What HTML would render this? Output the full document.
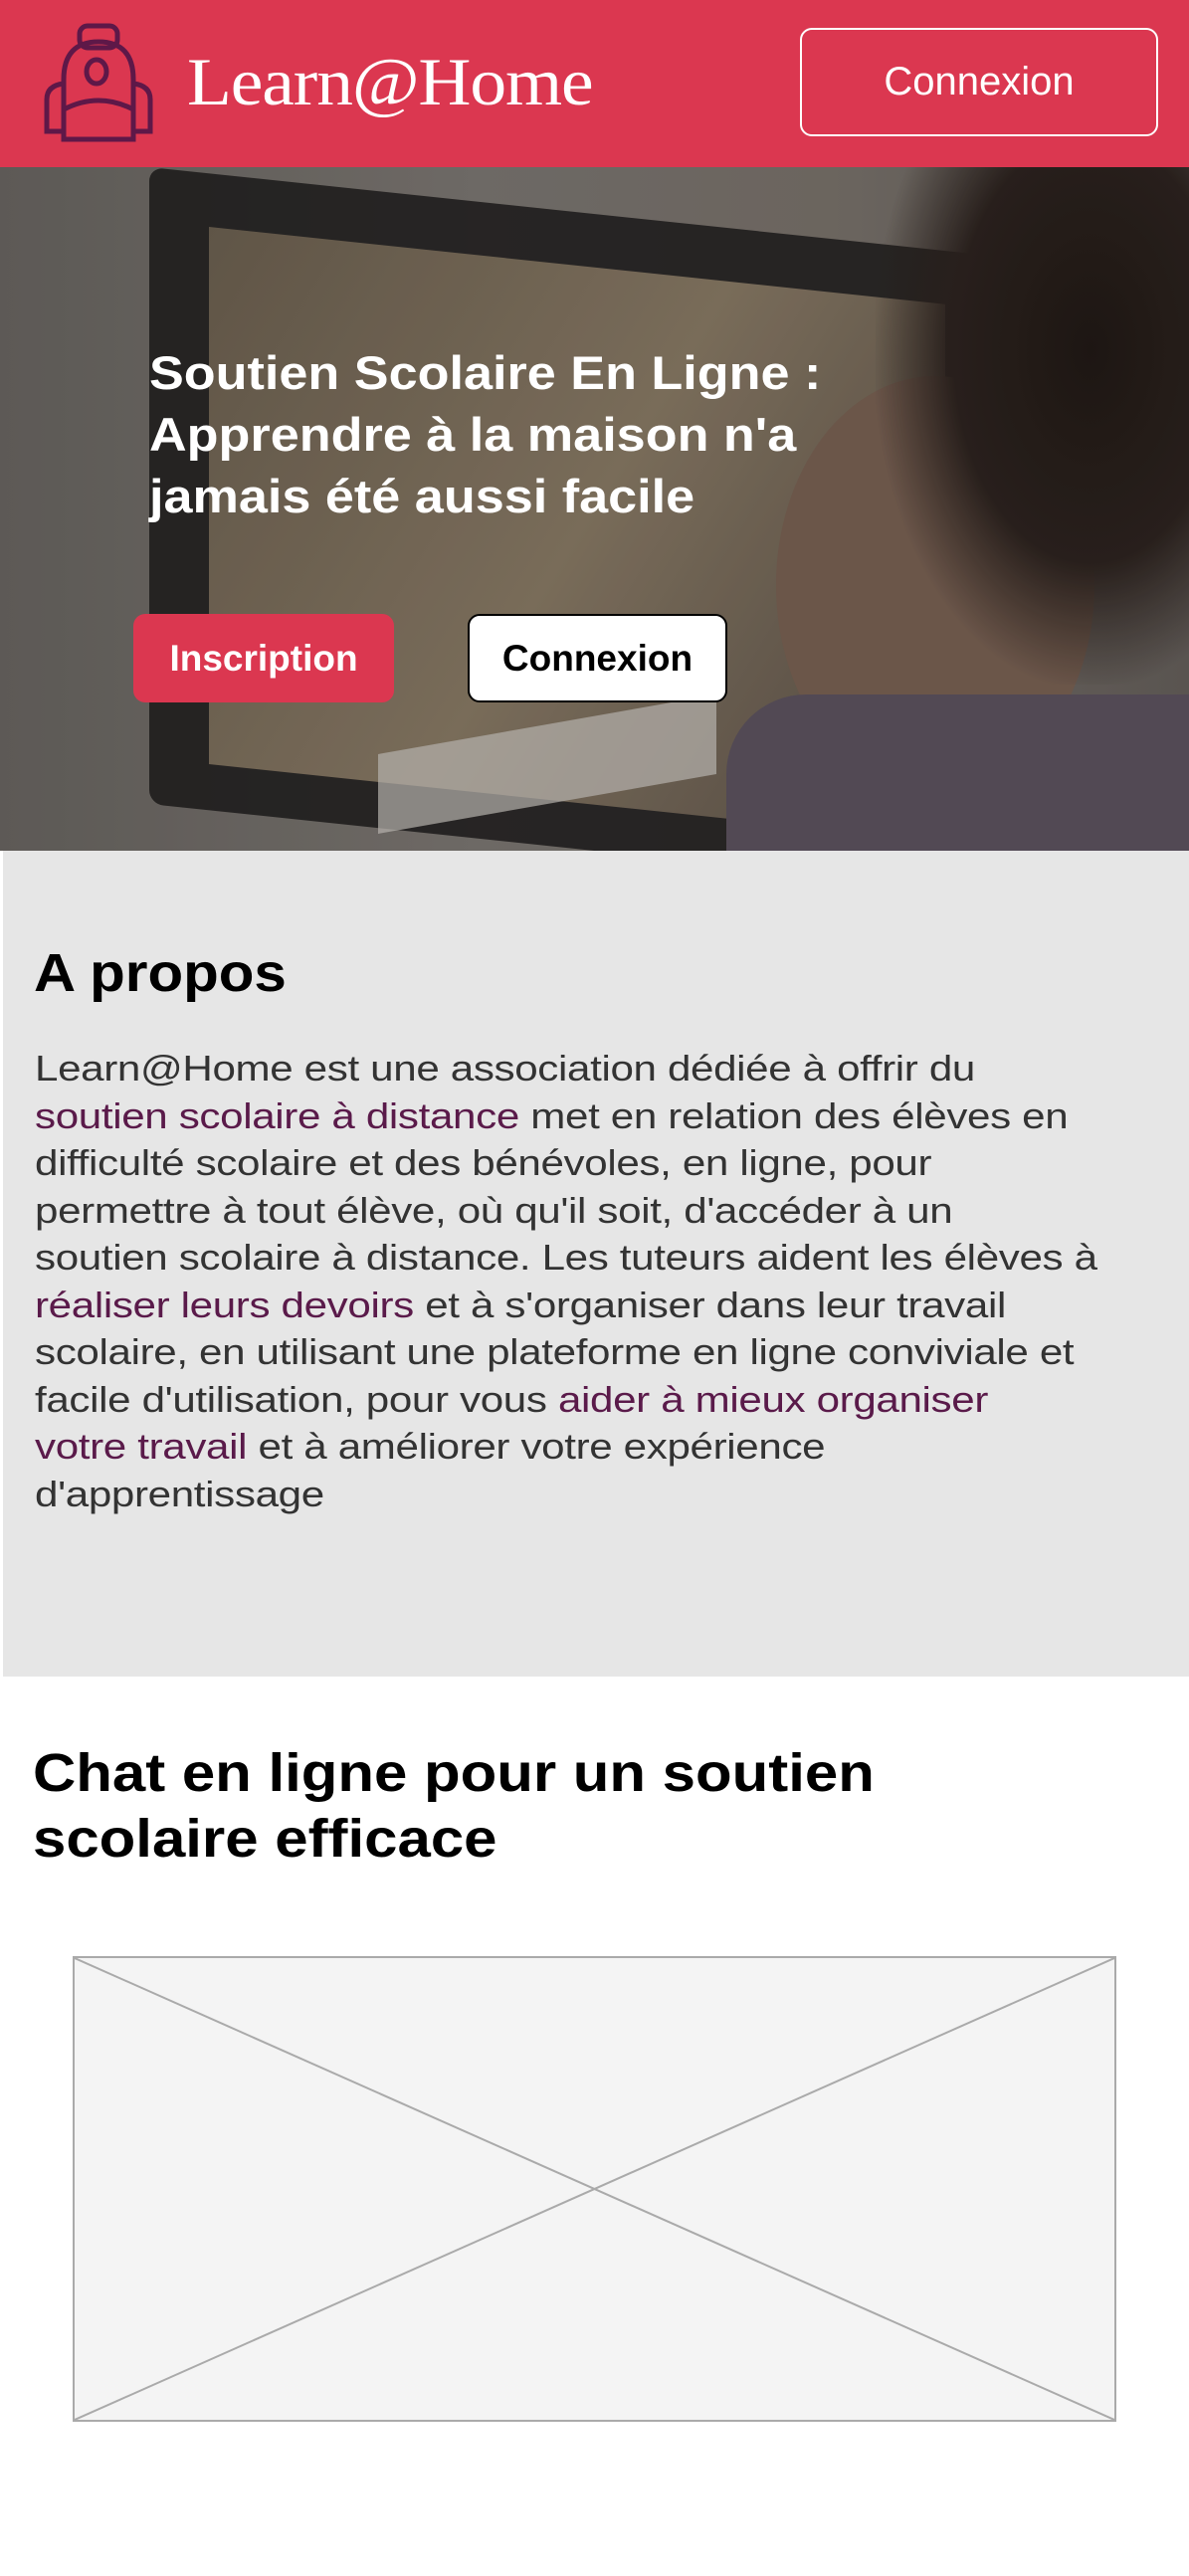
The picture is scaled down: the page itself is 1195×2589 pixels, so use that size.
<!DOCTYPE html>
<html><head><meta charset="utf-8"><style>
*{margin:0;padding:0;box-sizing:border-box}
body{width:1195px;height:2589px;background:#fff;font-family:"Liberation Sans",sans-serif;position:relative;overflow:hidden}
.hdr{position:absolute;left:0;top:0;width:1195px;height:168px;background:#db3750}
.brand{position:absolute;left:188px;top:42px;color:#fff;font-family:"Liberation Serif",serif;font-size:68px;line-height:80px;letter-spacing:-1px;transform:scaleX(1.08);transform-origin:0 0}
.hbtn{position:absolute;left:804px;top:28px;width:360px;height:109px;border:2px solid #fff;border-radius:12px;color:#fff;font-size:40px;display:flex;align-items:center;justify-content:center}
.hero{position:absolute;left:0;top:168px;width:1195px;height:687px;overflow:hidden;background:linear-gradient(90deg,#6a6662 0%,#7d7873 40%,#7a736c 70%,#66605c 100%)}
.ht{position:absolute;left:150px;top:176px;color:#fff;font-weight:bold;font-size:47px;line-height:62px;width:760px;transform:scaleX(1.11);transform-origin:0 0}
.b1{position:absolute;left:134px;top:449px;width:262px;height:89px;background:#db3750;border-radius:12px;color:#fff;font-weight:bold;font-size:37px;display:flex;align-items:center;justify-content:center}
.b2{position:absolute;left:470px;top:449px;width:261px;height:89px;background:#fff;border:2px solid #000;border-radius:12px;color:#000;font-weight:bold;font-size:37px;display:flex;align-items:center;justify-content:center}
.about{position:absolute;left:3px;top:855px;width:1192px;height:830px;background:#e6e6e6}
h2{font-size:54px;font-weight:bold;color:#000;transform-origin:0 0}
.ah{position:absolute;left:31px;top:90px;line-height:66px;transform:scaleX(1.08)}
.ap{position:absolute;left:32px;top:195px;font-size:36px;line-height:47.5px;color:#333;white-space:nowrap;letter-spacing:-0.3px;transform:scaleX(1.17);transform-origin:0 0}
.ap b{font-weight:normal;color:#5a1a4a}
.ch{position:absolute;left:33px;top:1749px;line-height:66px;transform:scaleX(1.11)}
.ph{position:absolute;left:73px;top:1966px;width:1049px;height:468px;background:#f4f4f4;border:2px solid #aaa}
</style></head><body>
<div class="hdr">
<svg style="position:absolute;left:0;top:0" width="170" height="168" viewBox="0 0 170 168" fill="none" stroke="#5e1848" stroke-width="5">
<rect x="80" y="26" width="38" height="22" rx="8"/>
<path d="M64 140 V80 Q64 42 99 42 Q134 42 134 80 V140 Z"/>
<path d="M64 110 Q99 92 134 110"/>
<ellipse cx="97" cy="72" rx="10" ry="12"/>
<path d="M64 84 Q47 86 47 100 V132 H64 M134 84 Q151 86 151 100 V132 H134"/>
</svg>
<div class="brand">Learn@Home</div>
<div class="hbtn">Connexion</div>
</div>
<div class="hero">
<div style="position:absolute;left:150px;top:0;width:860px;height:640px;background:#1f1c1c;border-radius:14px;transform:skewY(6deg);transform-origin:0 0;opacity:.85"></div>
<div style="position:absolute;left:210px;top:60px;width:740px;height:540px;background:linear-gradient(120deg,#6d6151,#8a7b66 50%,#5a5048);transform:skewY(6deg);transform-origin:0 0"></div>
<div style="position:absolute;left:380px;top:560px;width:340px;height:80px;background:#cfcac5;transform:skewY(-10deg);opacity:.7"></div>
<div style="position:absolute;left:780px;top:210px;width:320px;height:420px;background:#7a6254;border-radius:50%"></div>
<div style="position:absolute;left:880px;top:-40px;width:360px;height:560px;background:radial-gradient(ellipse at 60% 40%,#221a16 0%,#2e2420 45%,rgba(40,30,26,0) 72%)"></div>
<div style="position:absolute;left:730px;top:530px;width:470px;height:200px;background:#5e5460;border-radius:80px 0 0 0"></div>
<div style="position:absolute;inset:0;background:rgba(0,0,0,.12)"></div>
<div class="ht">Soutien Scolaire En Ligne :<br>Apprendre à la maison n'a<br>jamais été aussi facile</div>
<div class="b1">Inscription</div>
<div class="b2">Connexion</div>
</div>
<div class="about">
<h2 class="ah">A propos</h2>
<div class="ap">Learn@Home est une association dédiée à offrir du<br><b>soutien scolaire à distance</b> met en relation des élèves en<br>difficulté scolaire et des bénévoles, en ligne, pour<br>permettre à tout élève, où qu'il soit, d'accéder à un<br>soutien scolaire à distance. Les tuteurs aident les élèves à<br><b>réaliser leurs devoirs</b> et à s'organiser dans leur travail<br>scolaire, en utilisant une plateforme en ligne conviviale et<br>facile d'utilisation, pour vous <b>aider à mieux organiser</b><br><b>votre travail</b> et à améliorer votre expérience<br>d'apprentissage</div>
</div>
<h2 class="ch">Chat en ligne pour un soutien<br>scolaire efficace</h2>
<div class="ph"><svg width="1045" height="464" style="position:absolute;left:0;top:0"><line x1="0" y1="0" x2="1045" y2="464" stroke="#aaa" stroke-width="2"/><line x1="1045" y1="0" x2="0" y2="464" stroke="#aaa" stroke-width="2"/></svg></div>
</body></html>
